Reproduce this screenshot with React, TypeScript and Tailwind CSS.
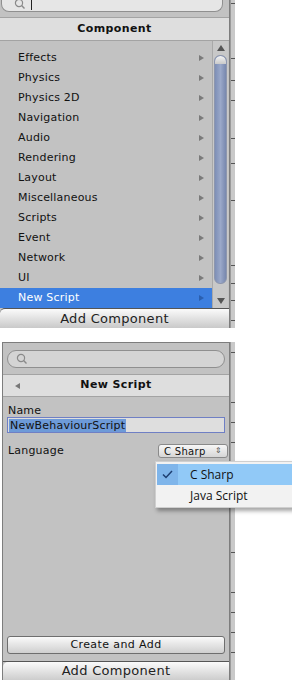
import React from "react";

const items = [
  "Effects",
  "Physics",
  "Physics 2D",
  "Navigation",
  "Audio",
  "Rendering",
  "Layout",
  "Miscellaneous",
  "Scripts",
  "Event",
  "Network",
  "UI",
];

function SearchIcon() {
  return (
    <svg width="12" height="12" viewBox="0 0 12 12" className="shrink-0">
      <circle cx="5" cy="5" r="3.6" fill="none" stroke="#8a8a8a" strokeWidth="1.2" />
      <line x1="7.6" y1="7.6" x2="10.5" y2="10.5" stroke="#8a8a8a" strokeWidth="1.4" />
    </svg>
  );
}

function RightTri({ color = "#7a7a7a" }: { color?: string }) {
  return (
    <svg width="5" height="6" viewBox="0 0 5 6">
      <polygon points="0,0 5,3 0,6" fill={color} />
    </svg>
  );
}

function TickStrip({ ticks }: { ticks: number[] }) {
  return (
    <div className="relative w-[5px] self-stretch bg-[#c9c9c9] border-l border-[#9a9a9a]">
      {ticks.map((t) => (
        <div key={t} className="absolute left-0 w-[4px] h-px bg-[#555]" style={{ top: t }} />
      ))}
    </div>
  );
}

export default function App() {
  return (
    <div
      className="relative w-[292px] h-[680px] bg-white overflow-hidden text-[#111]"
      style={{ fontFamily: '"DejaVu Sans", Verdana, sans-serif' }}
    >
      {/* TOP PANEL */}
      <div className="flex h-[328px]">
        <div className="w-[230px] flex flex-col bg-[#c2c2c2] border-r border-[#7d7d7d]">
          <div className="h-[17px] px-[1px]">
            <div className="h-[12px] rounded-b-[8px] border border-t-0 border-[#8f8f8f] bg-[#e6e6e6] flex items-end pl-[12px] pb-[1px] gap-[5px] w-[222px]">
              <div className="-mt-[4px]">
                <SearchIcon />
              </div>
              <div className="w-px h-[10px] bg-[#222]" />
            </div>
          </div>
          <div className="h-[24px] bg-[#dedede] border-t border-b border-[#a3a3a3] flex items-center justify-center text-[11px] font-bold tracking-[0.4px]">
            Component
          </div>
          <div className="flex flex-1">
            <div className="flex-1 flex flex-col pt-[7px]">
              {items.map((it) => (
                <div key={it} className="h-[20px] flex items-center justify-between pl-[18px] pr-[8px] text-[11px] tracking-[0.2px]">
                  <span>{it}</span>
                  <RightTri />
                </div>
              ))}
              <div className="h-[20px] flex items-center justify-between pl-[18px] pr-[8px] text-[11px] tracking-[0.2px] bg-[#3d7fe0] text-white">
                <span>New Script</span>
                <RightTri color="#2a5fb0" />
              </div>
            </div>
            <div className="w-[16px] mr-[1px] bg-[#c8c8c8] border-l border-[#a9a9a9] flex flex-col items-center pt-[4px] pb-[4px]">
              <svg width="8" height="6" viewBox="0 0 8 6">
                <polygon points="0,6 4,0 8,6" fill="#555" />
              </svg>
              <div className="mt-[4px] w-[13px] h-[229px] rounded-[6px] border border-[#8d96ad] bg-gradient-to-r from-[#7e8fb6] via-[#9aa8c9] to-[#7888ae] relative overflow-hidden">
                <div className="absolute top-0 left-0 right-0 h-[8px] rounded-t-[6px] bg-gradient-to-b from-[#f4f4f4] to-[#c9c9c9]" />
              </div>
              <div className="flex-1" />
              <svg width="8" height="6" viewBox="0 0 8 6">
                <polygon points="0,0 8,0 4,6" fill="#555" />
              </svg>
            </div>
          </div>
          <div className="h-[20px] border-t border-[#555] rounded-tl-[5px] bg-gradient-to-b from-[#fbfbfb] to-[#c9c9c9] flex items-center justify-center text-[13px] tracking-[0.3px] text-[#222]">
            Add Component
          </div>
        </div>
        <TickStrip ticks={[3, 58, 80, 100, 138, 163, 200, 265, 283, 300, 320]} />
      </div>

      {/* gap */}
      <div className="h-[14px]" />

      {/* BOTTOM PANEL */}
      <div className="flex h-[338px] pl-[2px]">
        <div className="w-[228px] flex flex-col bg-[#c2c2c2] border-l border-t border-r border-[#7d7d7d]">
          <div className="h-[31px] px-[4px] pt-[7px]">
            <div className="h-[18px] rounded-full border border-[#8f8f8f] bg-[#d4d4d4] flex items-center pl-[8px]">
              <SearchIcon />
            </div>
          </div>
          <div className="h-[23px] bg-[#dedede] border-t border-b border-[#a3a3a3] flex items-center relative">
            <div className="absolute left-[12px] top-[8px]">
              <svg width="5" height="6" viewBox="0 0 5 6">
                <polygon points="5,0 0,3 5,6" fill="#777" />
              </svg>
            </div>
            <div className="flex-1 text-center text-[11px] font-bold tracking-[0.4px]">New Script</div>
          </div>
          <div className="pl-[5px] pt-[6px] text-[11px] tracking-[0.2px] h-[20px]">Name</div>
          <div className="mx-[4px] h-[16px] border border-[#6f7fc4] bg-[#dedede] flex items-center pl-[1px]">
            <span className="bg-[#6d9ad8] text-[#111] text-[11px] leading-[13px] tracking-[0.2px] px-[1px]">NewBehaviourScript</span>
          </div>
          <div className="flex items-center justify-between pl-[5px] pr-[1px] mt-[10px] h-[16px]">
            <span className="text-[11px] tracking-[0.2px]">Language</span>
            <div className="w-[70px] h-[14px] rounded-[3px] border border-[#8a8a8a] bg-gradient-to-b from-[#f7f7f7] to-[#d6d6d6] flex items-center justify-between px-[5px] text-[10px] tracking-[0.3px]">
              <span>C Sharp</span>
              <span className="text-[8px] text-[#555] leading-none">⇕</span>
            </div>
          </div>
          <div className="flex-1" />
          <div className="mx-[4px] h-[18px] rounded-[3px] border border-[#6e6e6e] bg-gradient-to-b from-[#fafafa] to-[#cfcfcf] flex items-center justify-center text-[11px] tracking-[0.4px]">
            Create and Add
          </div>
          <div className="h-[8px] border-b border-[#555]" />
          <div className="h-[18px] rounded-tl-[5px] bg-gradient-to-b from-[#fbfbfb] to-[#cdcdcd] flex items-center justify-center text-[13px] tracking-[0.3px] text-[#222]">
            Add Component
          </div>
        </div>
        <TickStrip ticks={[10, 60, 80, 100, 210, 250, 270, 290, 310]} />
      </div>

      {/* POPUP MENU */}
      <div
        className="absolute left-[155px] top-[461px] w-[140px] h-[47px] bg-[#f2f2f2] border border-[#cfcfcf] shadow-[2px_3px_4px_rgba(0,0,0,0.35)] pt-[2px]"
        style={{ fontFamily: '"Open Sans", "Noto Sans", sans-serif' }}
      >
        <div className="h-[21px] flex items-center bg-[#91c9f7] ml-[1px]">
          <div className="w-[21px] h-full bg-[#7fb5ea] flex items-center justify-center">
            <svg width="11" height="9" viewBox="0 0 11 9">
              <polyline points="1,4.5 4,7.5 10,1" fill="none" stroke="#1e3e70" strokeWidth="1.5" />
            </svg>
          </div>
          <span className="ml-[12px] text-[12px] text-[#111]">C Sharp</span>
        </div>
        <div className="h-[21px] flex items-center pl-[34px] text-[12px] text-[#111]">Java Script</div>
      </div>
    </div>
  );
}
